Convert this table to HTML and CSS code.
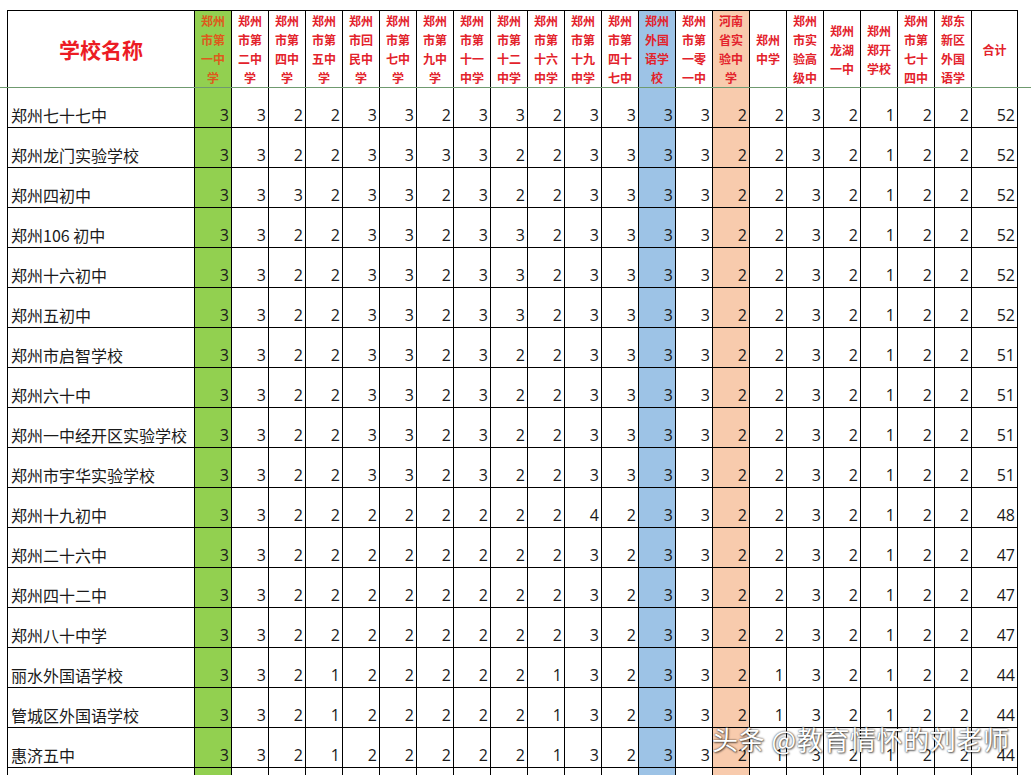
FILE: index.html
```html
<!DOCTYPE html>
<html lang="zh-CN">
<head>
<meta charset="utf-8">
<title>学校名称</title>
<link rel="stylesheet" href="styles.css">
</head>
<body>
<div class="page">
<table class="sheet">
<colgroup>
<col class="c-name">
<col class="c-num g"><col class="c-num"><col class="c-num"><col class="c-num"><col class="c-num"><col class="c-num"><col class="c-num"><col class="c-num"><col class="c-num"><col class="c-num"><col class="c-num"><col class="c-num">
<col class="c-num b"><col class="c-num"><col class="c-num o"><col class="c-num"><col class="c-num"><col class="c-num"><col class="c-num"><col class="c-num"><col class="c-num">
<col class="c-total">
</colgroup>
<thead>
<tr>
<th class="title">学校名称</th>
<th class="alt">郑州<br>市第<br>一中<br>学</th>
<th>郑州<br>市第<br>二中<br>学</th>
<th>郑州<br>市第<br>四中<br>学</th>
<th>郑州<br>市第<br>五中<br>学</th>
<th>郑州<br>市回<br>民中<br>学</th>
<th>郑州<br>市第<br>七中<br>学</th>
<th>郑州<br>市第<br>九中<br>学</th>
<th>郑州<br>市第<br>十一<br>中学</th>
<th>郑州<br>市第<br>十二<br>中学</th>
<th>郑州<br>市第<br>十六<br>中学</th>
<th>郑州<br>市第<br>十九<br>中学</th>
<th>郑州<br>市第<br>四十<br>七中</th>
<th>郑州<br>外国<br>语学<br>校</th>
<th>郑州<br>市第<br>一零<br>一中</th>
<th>河南<br>省实<br>验中<br>学</th>
<th>郑州<br>中学</th>
<th>郑州<br>市实<br>验高<br>级中</th>
<th>郑州<br>龙湖<br>一中</th>
<th>郑州<br>郑开<br>学校</th>
<th>郑州<br>市第<br>七十<br>四中</th>
<th>郑东<br>新区<br>外国<br>语学</th>
<th>合计</th>
</tr>
</thead>
<tbody>
<tr><td class="name">郑州七十七中</td><td>3</td><td>3</td><td>2</td><td>2</td><td>3</td><td>3</td><td>2</td><td>3</td><td>3</td><td>2</td><td>3</td><td>3</td><td>3</td><td>3</td><td>2</td><td>2</td><td>3</td><td>2</td><td>1</td><td>2</td><td>2</td><td>52</td></tr>
<tr><td class="name">郑州龙门实验学校</td><td>3</td><td>3</td><td>2</td><td>2</td><td>3</td><td>3</td><td>3</td><td>3</td><td>2</td><td>2</td><td>3</td><td>3</td><td>3</td><td>3</td><td>2</td><td>2</td><td>3</td><td>2</td><td>1</td><td>2</td><td>2</td><td>52</td></tr>
<tr><td class="name">郑州四初中</td><td>3</td><td>3</td><td>3</td><td>2</td><td>3</td><td>3</td><td>2</td><td>3</td><td>2</td><td>2</td><td>3</td><td>3</td><td>3</td><td>3</td><td>2</td><td>2</td><td>3</td><td>2</td><td>1</td><td>2</td><td>2</td><td>52</td></tr>
<tr><td class="name">郑州106 初中</td><td>3</td><td>3</td><td>2</td><td>2</td><td>3</td><td>3</td><td>2</td><td>3</td><td>3</td><td>2</td><td>3</td><td>3</td><td>3</td><td>3</td><td>2</td><td>2</td><td>3</td><td>2</td><td>1</td><td>2</td><td>2</td><td>52</td></tr>
<tr><td class="name">郑州十六初中</td><td>3</td><td>3</td><td>2</td><td>2</td><td>3</td><td>3</td><td>2</td><td>3</td><td>3</td><td>2</td><td>3</td><td>3</td><td>3</td><td>3</td><td>2</td><td>2</td><td>3</td><td>2</td><td>1</td><td>2</td><td>2</td><td>52</td></tr>
<tr><td class="name">郑州五初中</td><td>3</td><td>3</td><td>2</td><td>2</td><td>3</td><td>3</td><td>2</td><td>3</td><td>3</td><td>2</td><td>3</td><td>3</td><td>3</td><td>3</td><td>2</td><td>2</td><td>3</td><td>2</td><td>1</td><td>2</td><td>2</td><td>52</td></tr>
<tr><td class="name">郑州市启智学校</td><td>3</td><td>3</td><td>2</td><td>2</td><td>3</td><td>3</td><td>2</td><td>3</td><td>2</td><td>2</td><td>3</td><td>3</td><td>3</td><td>3</td><td>2</td><td>2</td><td>3</td><td>2</td><td>1</td><td>2</td><td>2</td><td>51</td></tr>
<tr><td class="name">郑州六十中</td><td>3</td><td>3</td><td>2</td><td>2</td><td>3</td><td>3</td><td>2</td><td>3</td><td>2</td><td>2</td><td>3</td><td>3</td><td>3</td><td>3</td><td>2</td><td>2</td><td>3</td><td>2</td><td>1</td><td>2</td><td>2</td><td>51</td></tr>
<tr><td class="name">郑州一中经开区实验学校</td><td>3</td><td>3</td><td>2</td><td>2</td><td>3</td><td>3</td><td>2</td><td>3</td><td>2</td><td>2</td><td>3</td><td>3</td><td>3</td><td>3</td><td>2</td><td>2</td><td>3</td><td>2</td><td>1</td><td>2</td><td>2</td><td>51</td></tr>
<tr><td class="name">郑州市宇华实验学校</td><td>3</td><td>3</td><td>2</td><td>2</td><td>3</td><td>3</td><td>2</td><td>3</td><td>2</td><td>2</td><td>3</td><td>3</td><td>3</td><td>3</td><td>2</td><td>2</td><td>3</td><td>2</td><td>1</td><td>2</td><td>2</td><td>51</td></tr>
<tr><td class="name">郑州十九初中</td><td>3</td><td>3</td><td>2</td><td>2</td><td>2</td><td>2</td><td>2</td><td>2</td><td>2</td><td>2</td><td>4</td><td>2</td><td>3</td><td>3</td><td>2</td><td>2</td><td>3</td><td>2</td><td>1</td><td>2</td><td>2</td><td>48</td></tr>
<tr><td class="name">郑州二十六中</td><td>3</td><td>3</td><td>2</td><td>2</td><td>2</td><td>2</td><td>2</td><td>2</td><td>2</td><td>2</td><td>3</td><td>2</td><td>3</td><td>3</td><td>2</td><td>2</td><td>3</td><td>2</td><td>1</td><td>2</td><td>2</td><td>47</td></tr>
<tr><td class="name">郑州四十二中</td><td>3</td><td>3</td><td>2</td><td>2</td><td>2</td><td>2</td><td>2</td><td>2</td><td>2</td><td>2</td><td>3</td><td>2</td><td>3</td><td>3</td><td>2</td><td>2</td><td>3</td><td>2</td><td>1</td><td>2</td><td>2</td><td>47</td></tr>
<tr><td class="name">郑州八十中学</td><td>3</td><td>3</td><td>2</td><td>2</td><td>2</td><td>2</td><td>2</td><td>2</td><td>2</td><td>2</td><td>3</td><td>2</td><td>3</td><td>3</td><td>2</td><td>2</td><td>3</td><td>2</td><td>1</td><td>2</td><td>2</td><td>47</td></tr>
<tr><td class="name">丽水外国语学校</td><td>3</td><td>3</td><td>2</td><td>1</td><td>2</td><td>2</td><td>2</td><td>2</td><td>2</td><td>1</td><td>3</td><td>2</td><td>3</td><td>3</td><td>2</td><td>1</td><td>3</td><td>2</td><td>1</td><td>2</td><td>2</td><td>44</td></tr>
<tr><td class="name">管城区外国语学校</td><td>3</td><td>3</td><td>2</td><td>1</td><td>2</td><td>2</td><td>2</td><td>2</td><td>2</td><td>1</td><td>3</td><td>2</td><td>3</td><td>3</td><td>2</td><td>1</td><td>3</td><td>2</td><td>1</td><td>2</td><td>2</td><td>44</td></tr>
<tr><td class="name">惠济五中</td><td>3</td><td>3</td><td>2</td><td>1</td><td>2</td><td>2</td><td>2</td><td>2</td><td>2</td><td>1</td><td>3</td><td>2</td><td>3</td><td>3</td><td>2</td><td>1</td><td>3</td><td>2</td><td>1</td><td>2</td><td>2</td><td>44</td></tr>
<tr><td class="name"></td><td></td><td></td><td></td><td></td><td></td><td></td><td></td><td></td><td></td><td></td><td></td><td></td><td></td><td></td><td></td><td></td><td></td><td></td><td></td><td></td><td></td><td></td></tr>
</tbody>
</table>
<div class="freeze"></div>
<div class="watermark">头条 @教育情怀的刘老师</div>
</div>
</body>
</html>
```
FILE: styles.css
```css
html, body {
  margin: 0;
  padding: 0;
  background: #ffffff;
  overflow: hidden;
}

.page {
  position: relative;
  width: 1031px;
  height: 775px;
  overflow: hidden;
  box-sizing: border-box;
  padding: 10px 0 0 7px;
  font-family: "Open Sans", "Noto Sans CJK SC", sans-serif;
}

.sheet {
  border-collapse: collapse;
  table-layout: fixed;
  width: 1010px;
}

.c-name { width: 187px; }
.c-num { width: 37px; }
.c-total { width: 46px; }

.g { background: #92d050; }
.b { background: #9dc3e6; }
.o { background: #f8cbad; }

.sheet th,
.sheet td {
  border: 1px solid #000000;
  padding: 0;
}

.sheet thead th {
  height: 76px;
  color: #e3222b;
  font-family: "Noto Sans CJK SC", sans-serif;
  font-weight: 700;
  font-size: 12px;
  line-height: 19px;
  text-align: center;
  vertical-align: middle;
  border-bottom-color: #6f9a6f;
}

.sheet thead th.title {
  font-size: 21px;
  line-height: 26px;
  color: #ec1c24;
}

.sheet thead th.alt {
  color: #de5a1c;
}

.sheet td {
  height: 37px;
  vertical-align: bottom;
  text-align: right;
  font-size: 16px;
  line-height: 20px;
  padding: 0 2px 2px 0;
  color: #1a1a1a;
}

.sheet td.name {
  text-align: left;
  padding-left: 3px;
  font-family: "Noto Sans CJK SC", sans-serif;
  font-size: 16px;
  white-space: nowrap;
}

.freeze {
  position: absolute;
  left: 0;
  right: 0;
  top: 87px;
  height: 1px;
  background: #6f9a6f;
}

.watermark {
  position: absolute;
  left: 712px;
  top: 723px;
  font-family: "Noto Sans CJK SC", sans-serif;
  font-size: 26px;
  line-height: 32px;
  letter-spacing: 0.6px;
  color: #ffffff;
  white-space: nowrap;
  text-shadow: 0 0 2px rgba(0, 0, 0, 0.8), 1px 1px 2px rgba(0, 0, 0, 0.55);
}
```
